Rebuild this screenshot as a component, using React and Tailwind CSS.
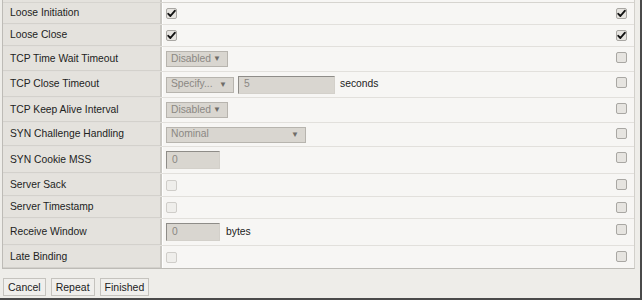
import React from 'react';

const rows = [
  { label: 'Loose Initiation', h: 22, value: { type: 'check', on: true }, right: true },
  { label: 'Loose Close', h: 22, value: { type: 'check', on: true }, right: true },
  { label: 'TCP Time Wait Timeout', h: 25, value: { type: 'select', text: 'Disabled', w: 62 } },
  { label: 'TCP Close Timeout', h: 26, value: { type: 'specify' } },
  { label: 'TCP Keep Alive Interval', h: 25, value: { type: 'select', text: 'Disabled', w: 62 } },
  { label: 'SYN Challenge Handling', h: 24, value: { type: 'select', text: 'Nominal', w: 140 } },
  { label: 'SYN Cookie MSS', h: 27, value: { type: 'input', text: '0' } },
  { label: 'Server Sack', h: 23, value: { type: 'check', on: false, disabled: true } },
  { label: 'Server Timestamp', h: 22, value: { type: 'check', on: false, disabled: true } },
  { label: 'Receive Window', h: 27, value: { type: 'input', text: '0', unit: 'bytes' } },
  { label: 'Late Binding', h: 22, value: { type: 'check', on: false, disabled: true } },
];

function Check({ on, disabled }) {
  return (
    <div
      className={
        'w-[11px] h-[11px] rounded-[2px] border flex items-center justify-center ' +
        (disabled ? 'border-[#cfcdc9] bg-[#efeeeb]' : 'border-[#a9a7a3] bg-[#e6e4e0]')
      }
    >
      {on && (
        <svg width="9" height="9" viewBox="0 0 9 9">
          <path d="M1.3 4.8 L3.4 7 L7.8 1.8" fill="none" stroke="#111" strokeWidth="1.9" strokeLinecap="round" strokeLinejoin="round" />
        </svg>
      )}
    </div>
  );
}

function Select({ text, w }) {
  return (
    <div
      className="h-[16px] flex items-center justify-between bg-[#d9d6d0] border border-[#b7b4ae] pl-[4px] pr-[6px] text-[#8b8883]"
      style={{ width: w }}
    >
      <span>{text}</span>
      <span className="text-[8px] text-[#6f6c68]">▼</span>
    </div>
  );
}

function TextBox({ text, w }) {
  return (
    <div
      className="h-[18px] flex items-center bg-[#d9d6d0] border border-[#d3d0ca] border-t-[#8e8c88] border-l-[#8e8c88] pl-[5px] text-[#8b8883]"
      style={{ width: w }}
    >
      {text}
    </div>
  );
}

function Value({ value }) {
  if (value.type === 'check') return <Check on={value.on} disabled={value.disabled} />;
  if (value.type === 'select') return <Select text={value.text} w={value.w} />;
  if (value.type === 'specify')
    return (
      <div className="flex items-center gap-[4px]">
        <Select text="Specify..." w={68} />
        <TextBox text="5" w={97} />
        <span className="ml-[1px] text-[#222]">seconds</span>
      </div>
    );
  return (
    <div className="flex items-center gap-[6px]">
      <TextBox text={value.text} w={54} />
      {value.unit && <span className="text-[#222]">{value.unit}</span>}
    </div>
  );
}

export default function App() {
  return (
    <div className="w-[644px] h-[304px] bg-white text-[10.3px] leading-none" style={{ fontFamily: '"Liberation Sans", Arial, sans-serif' }}>
      <div className="w-[642px] h-[300px] bg-[#eeede9] border-r-2 border-b-2 border-[#4a4a4a] pl-[2px]">
        <div className="w-[633px] border-l border-r border-b border-[#bdbbb6] border-r-[#d2d0cb] bg-[#f7f6f4]">
          <div className="flex h-[3px] border-b border-[#d6d4cf]">
            <div className="w-[159px] bg-[#e4e2dd] border-r-2 border-[#cac8c3]" />
            <div className="flex-1 border-l border-white" />
          </div>
          {rows.map((r, i) => (
            <div
              key={i}
              className={'flex ' + (i < rows.length - 1 ? 'border-b border-[#e2e0dc]' : '')}
              style={{ height: r.h }}
            >
              <div className="w-[159px] bg-[#e4e2dd] border-r-2 border-[#cac8c3] flex items-center pl-[7px] text-[#222] shadow-[inset_0_-1px_0_#d3d1cc]">
                {r.label}
              </div>
              <div className="flex-1 border-l border-white flex items-center pl-[3px]">
                <Value value={r.value} />
              </div>
              <div className="w-[22px] pt-[5px] pl-[4px]">
                <Check on={!!r.right} />
              </div>
            </div>
          ))}
        </div>
        <div className="flex gap-[5px] mt-[9px] pl-[1px]">
          {['Cancel', 'Repeat', 'Finished'].map((b) => (
            <div
              key={b}
              className="h-[18px] flex items-center px-[4px] bg-[#f0efec] border border-[#c5c3be] text-[#222] text-[10.5px]"
            >
              {b}
            </div>
          ))}
        </div>
      </div>
    </div>
  );
}
